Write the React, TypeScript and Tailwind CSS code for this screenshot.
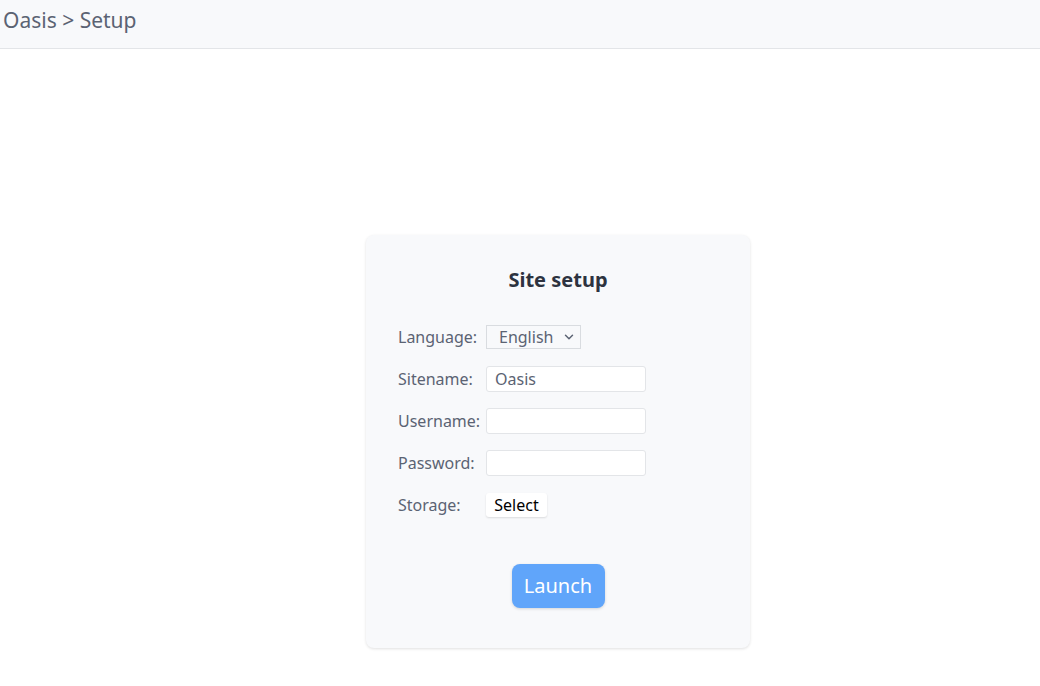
import { ChevronDown } from 'lucide-react'

const FONT = { fontFamily: '"Noto Sans", "Open Sans", sans-serif' }

function Row({ label, children }: { label: string; children: React.ReactNode }) {
  return (
    <div className="flex items-center h-[42px]">
      <span className="w-[88px] text-[16px] text-[#5b6373]">{label}</span>
      {children}
    </div>
  )
}

export default function App() {
  return (
    <div className="min-h-[686px] bg-white" style={FONT}>
      <header className="h-[49px] bg-[#f8f9fb] border-b border-[#e3e5e8]">
        <div className="pl-[3px] pt-[6px] text-[21px] leading-[28px] text-[#5b6373]">Oasis &gt; Setup</div>
      </header>

      <div className="ml-[366px] mt-[186px] w-[384px] bg-[#f8f9fb] rounded-lg shadow-[0_1px_3px_rgba(0,0,0,0.12)] pt-[31px] pb-[40px] px-[32px]">
        <h1 className="text-center text-[20px] font-bold leading-[28px] text-[#2d3340] mb-[22px]">Site setup</h1>

        <Row label="Language:">
          <div className="relative h-[24px] w-[95px] border border-[#d9dce0] flex items-center pl-[12px] text-[16px] text-[#5b6373]">
            English
            <ChevronDown size={14} strokeWidth={2.5} className="absolute right-[4px] text-[#5b6373]" />
          </div>
        </Row>
        <Row label="Sitename:">
          <div className="h-[26px] w-[160px] bg-white border border-[#e3e5e8] rounded-[3px] flex items-center pl-[8px] text-[16px] text-[#5b6373]">
            Oasis
          </div>
        </Row>
        <Row label="Username:">
          <div className="h-[26px] w-[160px] bg-white border border-[#e3e5e8] rounded-[3px]" />
        </Row>
        <Row label="Password:">
          <div className="h-[26px] w-[160px] bg-white border border-[#e3e5e8] rounded-[3px]" />
        </Row>
        <Row label="Storage:">
          <button className="h-[24px] w-[61px] bg-white rounded-[3px] shadow-[0_1px_2px_rgba(0,0,0,0.12)] text-[16px] text-black leading-none">
            Select
          </button>
        </Row>

        <div className="flex justify-center mt-[38px]">
          <button className="h-[44px] w-[93px] bg-[#60a5fa] rounded-lg shadow-[0_1px_3px_rgba(0,0,0,0.15)] text-white text-[20px]">
            Launch
          </button>
        </div>
      </div>
    </div>
  )
}
